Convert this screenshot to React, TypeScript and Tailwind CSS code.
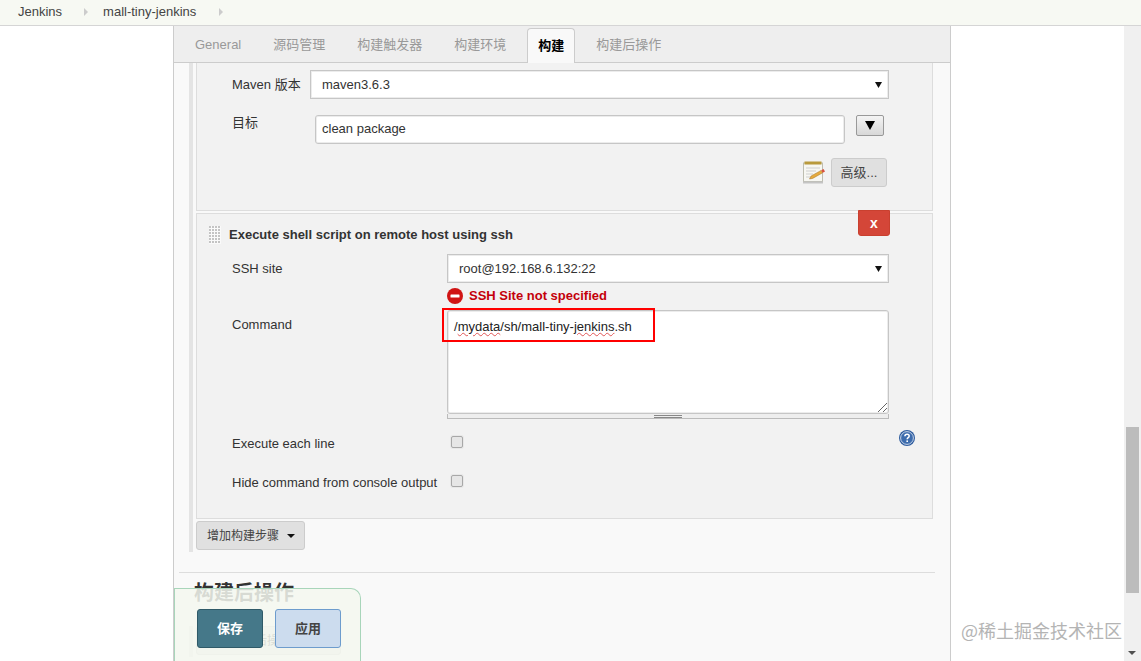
const font = { fontFamily: '"Liberation Sans", "Noto Sans CJK SC", Arial, sans-serif' };

const tabs = ['General', '源码管理', '构建触发器', '构建环境', '构建', '构建后操作'];

const Caret = () => (
  <svg width="7" height="6" viewBox="0 0 7 6" className="block">
    <path d="M0 0h7L3.5 6z" fill="#111" />
  </svg>
);

const FakeSelect = ({ value, className }: { value: string; className: string }) => (
  <div className={`flex h-[29px] items-center justify-between border border-[#c6c6c6] bg-white pl-[11px] pr-[6px] text-[13px] text-[#333] shadow-[inset_0_0_0_1px_#ececec] ${className}`}>
    <span>{value}</span>
    <Caret />
  </div>
);

const NotepadIcon = () => (
  <svg width="24" height="23" viewBox="0 0 24 23" className="block">
    <rect x="1.5" y="2" width="19" height="18.5" fill="#f7f7f2" stroke="#bdbdb0" />
    <rect x="1" y="20.5" width="20" height="2" fill="#c4c4c4" />
    <rect x="2.5" y="0.5" width="17" height="3" fill="#b99a3c" />
    <path d="M4 7h14M4 10h10M4 13h7M4 16h5" stroke="#cfcfcf" strokeWidth="1" />
    <path d="M7.5 18l1.6-3 10-5.6 1.6 2.4-10 5.6z" fill="#e6ab3e" stroke="#a5752a" strokeWidth="0.5" />
    <path d="M19.2 9.3l1.6 2.5 2.2-1.4-1.5-2.4z" fill="#d8503f" />
  </svg>
);

const HelpIcon = () => (
  <svg width="16" height="16" viewBox="0 0 16 16" className="block">
    <circle cx="8" cy="8" r="8" fill="#2f5d9f" />
    <circle cx="8" cy="8" r="6.4" fill="#3d6cad" stroke="#e8eef6" strokeWidth="0.8" />
    <path d="M5.9 6.2c0-1.3 1-2 2.2-2s2.1.7 2.1 1.9c0 1.6-2 1.6-2 3.2" fill="none" stroke="#fff" strokeWidth="1.5" />
    <rect x="7.4" y="10.4" width="1.6" height="1.6" fill="#fff" />
  </svg>
);

const ErrorIcon = () => (
  <svg width="16" height="16" viewBox="0 0 16 16" className="block">
    <circle cx="8" cy="8" r="8" fill="#d01414" />
    <rect x="3.5" y="6.4" width="9" height="3.2" rx="0.6" fill="#fff" />
  </svg>
);

const Handle = () => (
  <div className="grid h-[18px] w-[12px] grid-cols-[repeat(4,2px)] grid-rows-[repeat(6,2px)] gap-px bg-[#fafafa]">
    {Array.from({ length: 24 }).map((_, i) => (
      <span key={i} className="bg-[#c4c4c4]" />
    ))}
  </div>
);

const Check = () => (
  <input
    type="checkbox"
    className="h-[12px] w-[12px] appearance-none rounded-[2px] border border-[#a8a8a8] bg-[#e6e6e6] shadow-[0_0_0_1px_#e8e8e8]"
  />
);

export default function App() {
  return (
    <div className="relative flex h-[661px] w-[1141px] flex-col overflow-hidden bg-white text-[13px] text-[#333]" style={font}>
      {/* breadcrumb */}
      <div className="flex h-[26px] shrink-0 items-center border-b border-[#d5d5d5] bg-[#f7f9f3] pb-[2px] pl-[18px] text-[#444]">
        <span>Jenkins</span>
        <span className="ml-[22px] h-0 w-0 border-y-[4px] border-l-[4px] border-y-transparent border-l-[#ccc]" />
        <span className="ml-[15px]">mall-tiny-jenkins</span>
        <span className="ml-[23px] h-0 w-0 border-y-[4px] border-l-[4px] border-y-transparent border-l-[#ccc]" />
      </div>

      <div className="flex min-h-0 flex-1">
        <div className="w-[173px] shrink-0" />

        {/* main config panel */}
        <div className="flex w-[778px] shrink-0 flex-col overflow-hidden border-x border-[#ccc] bg-[#f9f9f9]">
          <div className="flex h-[37px] shrink-0 items-end gap-[10px] border-b border-[#ccc] bg-[#eee] pl-[10px]">
            {tabs.map((t) =>
              t === '构建' ? (
                <div key={t} className="relative top-px flex h-[35px] items-center rounded-t-[4px] border border-b-0 border-[#ccc] bg-[#f9f9f9] px-[10px] font-bold text-black">
                  {t}
                </div>
              ) : (
                <div key={t} className="flex h-[34px] items-center border border-transparent px-[10px] text-[#999]">
                  {t}
                </div>
              ),
            )}
          </div>

          <div className="min-h-0 flex-1 overflow-hidden pl-[15px] pr-[17px]">
            <div className="h-[489px] border-l-4 border-[#e4e4e4] pl-[3px]">
              {/* maven step */}
              <div className="h-[148px] border border-t-0 border-[#ddd] bg-[#f2f2f2] pl-[35px] pr-[43px]">
                <div className="flex h-[52px] items-start pt-[7px]">
                  <div className="w-[78px] pt-[5px]">Maven 版本</div>
                  <FakeSelect value="maven3.6.3" className="w-[579px]" />
                </div>
                <div className="flex h-[43px] items-start">
                  <div className="-mt-[2px] w-[83px]">目标</div>
                  <input
                    readOnly
                    defaultValue="clean package"
                    className="h-[29px] w-[530px] rounded-[3px] border border-[#c6c6c6] bg-white pb-[2px] pl-[6px] text-[13px] text-[#333] shadow-[inset_0_0_0_1px_#ececec] outline-none"
                  />
                  <button className="ml-[11px] flex h-[21px] w-[28px] items-center justify-center rounded-[2px] border border-[#999] bg-gradient-to-b from-[#f4f4f4] to-[#d8d8d8]">
                    <svg width="10" height="9" viewBox="0 0 10 9"><path d="M0 0h10L5 9z" fill="#000" /></svg>
                  </button>
                </div>
                <div className="flex items-center justify-end">
                  <NotepadIcon />
                  <button className="ml-[5px] mr-[2px] h-[29px] w-[56px] rounded-[3px] border border-[#ccc] bg-[#e0e0e0] text-[#444]">高级...</button>
                </div>
              </div>

              {/* ssh step */}
              <div className="relative mt-[2px] h-[306px] border border-[#ddd] bg-[#f2f2f2] pl-[35px] pr-[43px]">
                <button className="absolute right-[42px] top-[-4px] h-[26px] w-[32px] rounded-b-[3px] border border-[#c9402f] bg-[#d44638] text-[14px] font-bold text-white">x</button>

                <div className="-ml-[23px] flex h-[40px] items-center pt-[2px]">
                  <Handle />
                  <span className="ml-[8px] font-bold">Execute shell script on remote host using ssh</span>
                </div>

                <div className="flex items-start">
                  <div className="w-[215px] pt-[5px]">SSH site</div>
                  <FakeSelect value="root@192.168.6.132:22" className="w-[442px]" />
                </div>

                <div className="ml-[215px] mt-[4px] flex h-[17px] items-center font-bold text-[#c4000a]">
                  <ErrorIcon />
                  <span className="ml-[6px]">SSH Site not specified</span>
                </div>

                <div className="mt-[6px] flex items-start">
                  <div className="w-[215px] pt-[5px]">Command</div>
                  <div className="w-[442px]">
                    <div className="relative h-[104px] rounded-[3px] border border-[#c6c6c6] bg-white pl-[6px] pt-[6px] text-[#222] shadow-[inset_0_0_0_1px_#ececec]">
                      /<span className="underline decoration-[#e05555] decoration-wavy decoration-1 underline-offset-[1px]">mydata</span>/sh/mall-tiny-<span className="underline decoration-[#e05555] decoration-wavy decoration-1 underline-offset-[1px]">jenkins</span>.sh
                      <svg width="9" height="9" viewBox="0 0 9 9" className="absolute bottom-[1px] right-[1px]">
                        <path d="M0 9L9 0M5 9L9 5" stroke="#666" strokeWidth="1" />
                      </svg>
                      {/* red annotation box */}
                      <div className="absolute left-[-6px] top-[-3px] h-[34px] w-[213px] border-2 border-[#f00]" />
                    </div>
                    <div className="flex h-[5px] items-center justify-center border-x border-b border-[#bbb] bg-[#eee]">
                      <div className="h-[3px] w-[28px] border-y border-[#888]" />
                    </div>
                  </div>
                </div>

                <div className="relative mt-[11px] flex h-[24px] items-center">
                  <div className="w-[219px] pt-[4px]">Execute each line</div>
                  <Check />
                  <div className="absolute left-[667px] top-0">
                    <HelpIcon />
                  </div>
                </div>
                <div className="mt-[15px] flex h-[24px] items-center">
                  <div className="w-[219px] pt-[4px]">Hide command from console output</div>
                  <Check />
                </div>
              </div>

              <button className="mt-[2px] flex h-[29px] w-[109px] items-center rounded-[3px] border border-[#ccc] bg-[#e0e0e0] pl-[10px] text-[12px] text-[#444]">
                增加构建步骤
                <svg width="8" height="4" viewBox="0 0 8 4" className="ml-[8px]"><path d="M0 0h8L4 4z" fill="#111" /></svg>
              </button>
            </div>

            <div className="-ml-[10px] -mr-[2px] mt-[20px] border-t border-[#ddd] pl-[15px] pt-[7px]">
              <div className="text-[20px] font-bold leading-[26px] text-[#333]">构建后操作</div>
              <div className="-ml-[5px] mt-[20px] h-[31px] w-[152px] border-l-4 border-[#e4e4e4] pl-[3px]">
                <div className="flex h-[29px] items-center rounded-[3px] border border-[#ccc] bg-[#e0e0e0] pl-[10px] text-[12px] text-[#444]">增加构建后操作步骤</div>
              </div>
            </div>
          </div>
        </div>

        <div className="flex-1" />

        {/* scrollbar */}
        <div className="relative w-[17px] shrink-0 bg-[#f0f0f0]">
          <div className="absolute left-[2px] top-[401px] h-[166px] w-[13px] bg-[#bcbcbc]" />
          <svg width="8" height="4" viewBox="0 0 8 4" className="absolute bottom-[6px] left-[4px]"><path d="M0 0h8L4 4z" fill="#505050" /></svg>
        </div>
      </div>

      {/* sticky save bar */}
      <div className="absolute bottom-[-2px] left-[174px] flex h-[75px] w-[187px] items-start gap-[12px] rounded-tr-[10px] border border-b-0 border-[#a8d5ba] bg-[#f5f8f0]/85 pl-[22px] pt-[20px]">
        <button className="h-[39px] w-[66px] rounded-[3px] border border-[#2f5a68] bg-[#457889] font-bold text-white">保存</button>
        <button className="h-[39px] w-[66px] rounded-[3px] border border-[#6d9ccd] bg-[#ccdcee] font-bold text-[#444]">应用</button>
      </div>

      {/* watermark */}
      <div className="absolute left-[961px] top-[618px] text-[18px] leading-[24px] text-[#b4b4b4]" style={{ fontFamily: '"Noto Sans CJK SC", sans-serif' }}>
        @稀土掘金技术社区
      </div>
    </div>
  );
}
